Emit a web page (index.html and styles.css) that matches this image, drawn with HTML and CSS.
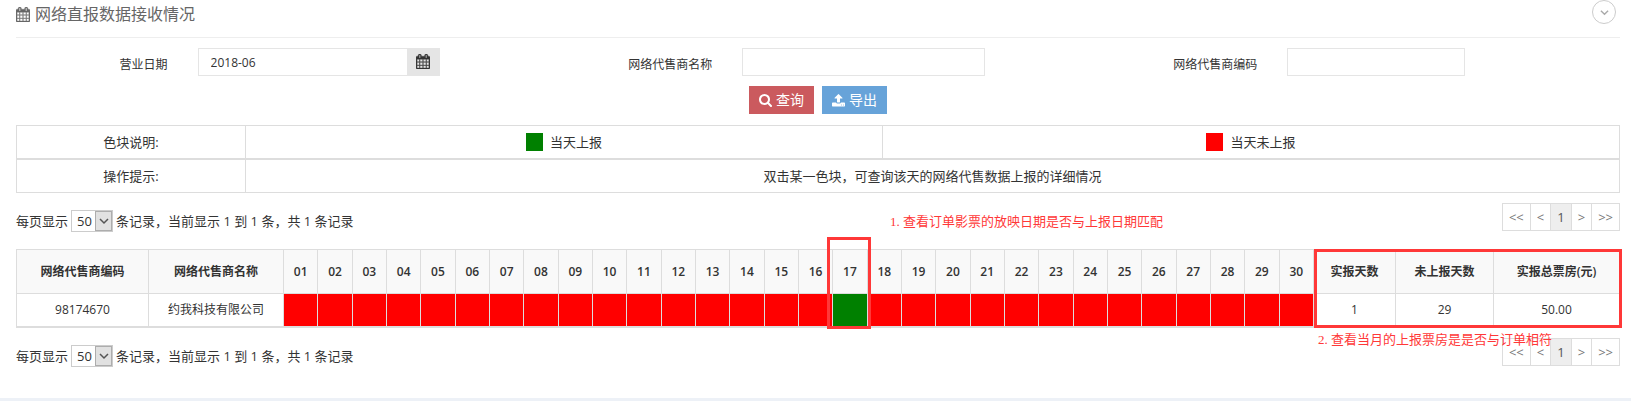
FILE: index.html
```html
<!DOCTYPE html>
<html lang="zh-CN">
<head>
<meta charset="utf-8">
<meta name="viewport" content="width=device-width, initial-scale=1">
<title>网络直报数据接收情况</title>
<link rel="stylesheet" href="styles.css">
</head>
<body>
<svg class="sprite" aria-hidden="true">
  <symbol id="calendar" viewBox="64 0 1664 1792"><path d="M192 1664h288v-288h-288v288zm352 0h320v-288h-320v288zm-352-352h288v-320h-288v320zm352 0h320v-320h-320v320zm-352-384h288v-288h-288v288zm736 736h320v-288h-320v288zm-384-736h320v-288h-320v288zm768 736h288v-288h-288v288zm-384-352h320v-320h-320v320zm-352-864v-288q0-13-9.500-22.500t-22.500-9.500h-64q-13 0-22.500 9.500t-9.500 22.500v288q0 13 9.500 22.500t22.500 9.500h64q13 0 22.500-9.500t9.500-22.500zm736 864h288v-320h-288v320zm-384-384h320v-288h-320v288zm384 0h288v-288h-288v288zm32-480v-288q0-13-9.500-22.500t-22.500-9.500h-64q-13 0-22.500 9.500t-9.500 22.500v288q0 13 9.500 22.500t22.500 9.500h64q13 0 22.500-9.500t9.500-22.500zm384-64v1280q0 52-38 90t-90 38h-1408q-52 0-90-38t-38-90v-1280q0-52 38-90t90-38h128v-96q0-66 47-113t113-47h64q66 0 113 47t47 113v96h384v-96q0-66 47-113t113-47h64q66 0 113 47t47 113v96h128q52 0 90 38t38 90z" stroke="currentColor" stroke-width="40"/></symbol>
  <symbol id="search" viewBox="64 128 1664 1664"><path d="M1216 832q0-185-131.500-316.500t-316.500-131.500-316.500 131.500-131.500 316.500 131.500 316.500 316.500 131.500 316.500-131.500 131.500-316.500zm512 832q0 52-38 90t-90 38q-54 0-90-38l-343-342q-179 124-399 124-143 0-273.500-55.500t-225-150-150-225-55.500-273.500 55.500-273.500 150-225 225-150 273.500-55.500 273.500 55.500 225 150 150 225 55.500 273.500q0 220-124 399l343 343q37 37 37 90z"/></symbol>
  <symbol id="upload" viewBox="64 64 1664 1664"><path d="M1344 1472q0-26-19-45t-45-19-45 19-19 45 19 45 45 19 45-19 19-45zm256 0q0-26-19-45t-45-19-45 19-19 45 19 45 45 19 45-19 19-45zm128-224v320q0 40-28 68t-68 28h-1472q-40 0-68-28t-28-68v-320q0-40 28-68t68-28h427q21 56 70.500 92t110.500 36h256q61 0 110.500-36t70.500-92h427q40 0 68 28t28 68zm-325-648q-17 40-59 40h-256v448q0 26-19 45t-45 19h-256q-26 0-45-19t-19-45v-448h-256q-42 0-59-40-17-39 14-69l448-448q18-19 45-19t45 19l448 448q31 30 14 69z"/></symbol>
  <symbol id="chevron" viewBox="0 0 10 10"><path d="M1 3l4 4 4-4" fill="none" stroke="currentColor" stroke-width="1.500"/></symbol>
</svg>

<main class="portlet">
  <header class="title-bar">
    <h1 class="title"><svg class="icon icon-title"><use href="#calendar"/></svg>网络直报数据接收情况</h1>
    <button class="toggle" type="button" aria-label="展开"><svg class="icon-toggle"><use href="#chevron"/></svg></button>
  </header>

  <form class="search-form">
    <div class="fields">
      <div class="field">
        <label for="month">营业日期</label>
        <div class="input-group">
          <input class="text-input" id="month" type="text" value="2018-06">
          <button class="addon" type="button" aria-label="选择日期"><svg class="icon"><use href="#calendar"/></svg></button>
        </div>
      </div>
      <div class="field">
        <label for="name">网络代售商名称</label>
        <input class="text-input" id="name" type="text">
      </div>
      <div class="field field-short">
        <label for="code">网络代售商编码</label>
        <input class="text-input" id="code" type="text">
      </div>
    </div>
    <div class="actions">
      <button class="btn btn-query" type="button"><svg class="icon-btn"><use href="#search"/></svg>查询</button>
      <button class="btn btn-export" type="button"><svg class="icon-btn"><use href="#upload"/></svg>导出</button>
    </div>
  </form>

  <table class="legend">
    <colgroup><col class="col-caption"><col class="col-reported"><col></colgroup>
    <tr><td>色块说明:</td><td><span class="swatch reported"></span>当天上报</td><td><span class="swatch missing"></span>当天未上报</td></tr>
  </table>
  <table class="legend">
    <colgroup><col class="col-caption"><col></colgroup>
    <tr><td>操作提示:</td><td>双击某一色块，可查询该天的网络代售数据上报的详细情况</td></tr>
  </table>

  <div class="pager">
    <div class="page-info">
      <label for="size-top">每页显示</label>
      <span class="select"><select id="size-top"><option>50</option></select><span class="arrow"><svg class="icon-arrow"><use href="#chevron"/></svg></span></span>
      <span>条记录，当前显示 1 到 1 条，共 1 条记录</span>
    </div>
    <nav class="pages"><a href="#">&lt;&lt;</a><a href="#">&lt;</a><a class="current" href="#">1</a><a href="#">&gt;</a><a href="#">&gt;&gt;</a></nav>
    <p class="note note-date">1. 查看订单影票的放映日期是否与上报日期匹配</p>
  </div>

  <div class="data">
    <table class="report">
      <colgroup><col class="col-code"><col class="col-name"><col span="30"><col class="col-days"><col class="col-missing"><col class="col-total"></colgroup>
      <thead>
        <tr>
          <th>网络代售商编码</th><th>网络代售商名称</th>
          <th>01</th><th>02</th><th>03</th><th>04</th><th>05</th><th>06</th><th>07</th><th>08</th><th>09</th><th>10</th>
          <th>11</th><th>12</th><th>13</th><th>14</th><th>15</th><th>16</th><th class="marked">17<span class="frame frame-day"></span></th><th>18</th><th>19</th><th>20</th>
          <th>21</th><th>22</th><th>23</th><th>24</th><th>25</th><th>26</th><th>27</th><th>28</th><th>29</th><th>30</th>
          <th>实报天数</th><th>未上报天数</th><th>实报总票房(元)</th>
        </tr>
      </thead>
      <tbody>
        <tr>
          <td>98174670</td><td>约我科技有限公司</td>
          <td class="missing"></td><td class="missing"></td><td class="missing"></td><td class="missing"></td><td class="missing"></td><td class="missing"></td><td class="missing"></td><td class="missing"></td><td class="missing"></td><td class="missing"></td>
          <td class="missing"></td><td class="missing"></td><td class="missing"></td><td class="missing"></td><td class="missing"></td><td class="missing"></td><td class="reported"></td><td class="missing"></td><td class="missing"></td><td class="missing"></td>
          <td class="missing"></td><td class="missing"></td><td class="missing"></td><td class="missing"></td><td class="missing"></td><td class="missing"></td><td class="missing"></td><td class="missing"></td><td class="missing"></td><td class="missing"></td>
          <td>1</td><td>29</td><td>50.00</td>
        </tr>
      </tbody>
    </table>
    <span class="frame frame-totals"></span>
    <p class="note note-total">2. 查看当月的上报票房是是否与订单相符</p>
  </div>

  <div class="pager">
    <div class="page-info">
      <label for="size-bottom">每页显示</label>
      <span class="select"><select id="size-bottom"><option>50</option></select><span class="arrow"><svg class="icon-arrow"><use href="#chevron"/></svg></span></span>
      <span>条记录，当前显示 1 到 1 条，共 1 条记录</span>
    </div>
    <nav class="pages"><a href="#">&lt;&lt;</a><a href="#">&lt;</a><a class="current" href="#">1</a><a href="#">&gt;</a><a href="#">&gt;&gt;</a></nav>
  </div>
</main>
</body>
</html>
```
FILE: styles.css
```css
* {
  box-sizing: border-box;
}

body {
  margin: 0;
  overflow-x: hidden;
  background: #edf1f7;
  color: #333;
  font: 13px/18px "Open Sans", "Noto Sans CJK SC", sans-serif;
}

button,
input,
select {
  margin: 0;
  font: inherit;
  color: inherit;
}

.sprite {
  position: absolute;
  width: 0;
  height: 0;
}

.portlet {
  padding: 0 11px 31px 16px;
  background: #fff;
}

.title-bar {
  display: flex;
  justify-content: space-between;
  align-items: flex-start;
  height: 38px;
  padding-right: 4px;
  border-bottom: 1px solid #eee;
}

.title {
  display: flex;
  align-items: center;
  gap: 5px;
  margin: 4px 0 0;
  color: #666;
  font-size: 16px;
  font-weight: 400;
  line-height: 20px;
}

.icon {
  width: 14px;
  height: 15px;
  fill: currentColor;
}

.toggle {
  display: grid;
  place-items: center;
  width: 24px;
  height: 24px;
  padding: 0;
  border: 1px solid #ccc;
  border-radius: 50%;
  background: none;
  color: #aaa;
}

.icon-toggle {
  width: 9px;
  height: 9px;
}

.fields {
  display: grid;
  grid-template-columns: repeat(3, 1fr);
  margin: 10px -15px 0;
}

.field {
  display: grid;
  grid-template-columns: 2fr 3fr 1fr;
}

.field-short {
  grid-template-columns: 182px 208px 1fr;
}

.field > label {
  padding: 8px 15px 0 0;
  font-size: 12px;
  text-align: right;
}

.field > :nth-child(2) {
  margin: 0 15px;
}

.text-input {
  min-width: 0;
  height: 28px;
  padding: 4px 12px;
  border: 1px solid #e5e5e5;
  border-radius: 0;
  background: #fff;
  font-size: 12px;
  outline: 0;
}

.input-group {
  display: flex;
}

.input-group .text-input {
  flex: 1;
  border-right: 0;
}

.addon {
  display: grid;
  place-items: center;
  width: 33px;
  padding: 0 0 2px;
  border: 0;
  background: #e5e5e5;
}

.actions {
  display: flex;
  justify-content: center;
  gap: 8px;
  margin: 10px 0 11px;
}

.btn {
  display: flex;
  align-items: center;
  justify-content: center;
  gap: 4px;
  height: 28px;
  padding: 0 10px;
  border: 0;
  color: #fff;
  font-size: 14px;
  line-height: 20px;
}

.btn-query {
  background: #cb5a5e;
}

.btn-export {
  background: #67a3d9;
}

.icon-btn {
  width: 13px;
  height: 13px;
  fill: currentColor;
}

.legend,
.report {
  width: 100%;
  border-collapse: collapse;
  table-layout: fixed;
}

.legend td {
  height: 33px;
  padding: 0;
  border: 1px solid #ddd;
  text-align: center;
}

.col-caption {
  width: 229px;
}

.col-reported {
  width: 637px;
}

.swatch {
  display: inline-block;
  width: 17px;
  height: 18px;
  margin-right: 7px;
  vertical-align: -4px;
}

.reported {
  background: #008000;
}

.missing {
  background: #f00;
}

.pager {
  position: relative;
  display: flex;
  justify-content: space-between;
  align-items: flex-start;
  margin-top: 10px;
}

.page-info {
  display: flex;
  align-items: center;
  gap: 3px;
  padding-top: 7px;
}

.select {
  position: relative;
  display: flex;
}

.select select {
  appearance: none;
  width: 42px;
  height: 22px;
  padding: 0 0 0 5px;
  border: 1px solid #ccc;
  border-radius: 0;
  background: #fff;
}

.arrow {
  position: absolute;
  inset: 1px 1px 1px auto;
  display: grid;
  place-items: center;
  width: 17px;
  border: 1px solid #adadad;
  background: #e1e1e1;
  color: #555;
  pointer-events: none;
}

.icon-arrow {
  width: 10px;
  height: 10px;
}

.pages {
  display: flex;
  border: 1px solid #ddd;
}

.pages a {
  height: 26px;
  padding: 4px 6px;
  color: #777;
  text-decoration: none;
}

.pages a + a {
  border-left: 1px solid #ddd;
}

.pages .current {
  background: #eee;
  color: #555;
}

.data {
  position: relative;
  margin-top: 17px;
}

.report {
  border-bottom: 2px solid #ddd;
  font-size: 12px;
}

.report th,
.report td {
  height: 33px;
  padding: 0;
  border: 1px solid #ddd;
  text-align: center;
}

.report th {
  height: 44px;
  background: #f9f9f9;
  font-weight: 600;
}

.col-code {
  width: 132px;
}

.col-name {
  width: 135px;
}

.col-days {
  width: 82px;
}

.col-missing {
  width: 98px;
}

.col-total {
  width: 126px;
}

.marked {
  position: relative;
}

.frame {
  position: absolute;
  border: 3px solid #ff3838;
  pointer-events: none;
}

.frame-day {
  top: -13px;
  left: -6px;
  width: 44px;
  height: 92px;
}

.frame-totals {
  top: 0;
  right: -2px;
  width: 308px;
  height: 79px;
}

.note {
  position: absolute;
  z-index: 1;
  margin: 0;
  color: #ff3838;
  font: 13px/18px "Liberation Serif", "Noto Sans CJK SC", sans-serif;
  white-space: nowrap;
}

.note-date {
  top: 10px;
  right: 457px;
}

.note-total {
  top: 82px;
  right: 68px;
}
```
